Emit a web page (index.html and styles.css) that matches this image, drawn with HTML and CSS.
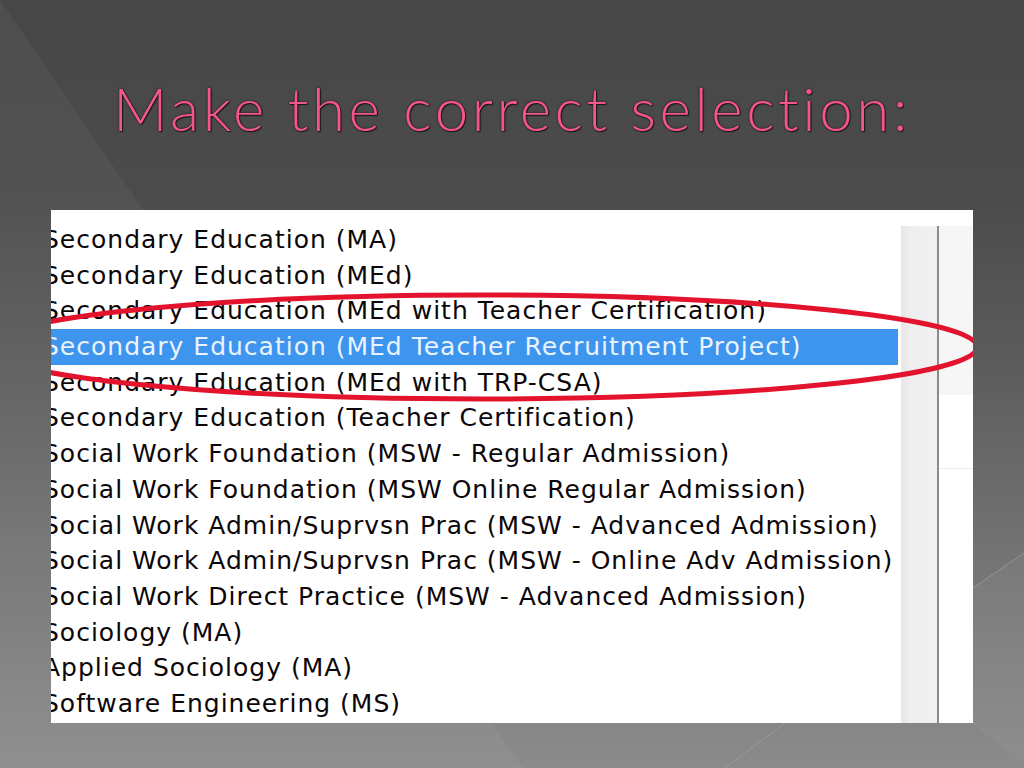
FILE: index.html
```html
<!DOCTYPE html>
<html lang="en">
<head>
<meta charset="utf-8">
<title>Make the correct selection</title>
<link rel="stylesheet" href="styles.css">
</head>
<body>
<div class="slide">
  <svg class="deco" width="1024" height="768" viewBox="0 0 1024 768" aria-hidden="true">
    <polygon points="0,0 523,768 0,768" fill="#ffffff" fill-opacity="0.045"/>
    <polygon points="1024,553 973,588 973,723 1024,760" fill="#ffffff" fill-opacity="0.04"/>
    <line x1="1024" y1="553" x2="960" y2="597" stroke="#a8a8a8" stroke-width="1" stroke-opacity="0.6"/>
    <line x1="785" y1="723" x2="725" y2="768" stroke="#a8a8a8" stroke-width="1" stroke-opacity="0.5"/>
    <line x1="973" y1="723" x2="1024" y2="762" stroke="#9a9a9a" stroke-width="1" stroke-opacity="0.5"/>
  </svg>
  <h1 class="title">Make the correct selection:</h1>
  <div class="shot">
    <div class="panes">
      <ul class="list">
        <li class="item">Secondary Education (MA)</li>
        <li class="item">Secondary Education (MEd)</li>
        <li class="item">Secondary Education (MEd with Teacher Certification)</li>
        <li class="item selected">Secondary Education (MEd Teacher Recruitment Project)</li>
        <li class="item">Secondary Education (MEd with TRP-CSA)</li>
        <li class="item">Secondary Education (Teacher Certification)</li>
        <li class="item">Social Work Foundation (MSW - Regular Admission)</li>
        <li class="item">Social Work Foundation (MSW Online Regular Admission)</li>
        <li class="item">Social Work Admin/Suprvsn Prac (MSW - Advanced Admission)</li>
        <li class="item">Social Work Admin/Suprvsn Prac (MSW - Online Adv Admission)</li>
        <li class="item">Social Work Direct Practice (MSW - Advanced Admission)</li>
        <li class="item">Sociology (MA)</li>
        <li class="item">Applied Sociology (MA)</li>
        <li class="item">Software Engineering (MS)</li>
      </ul>
      <div class="scroll"></div>
      <div class="divider"></div>
      <div class="side">
        <div class="side-top"></div>
        <div class="side-mid"></div>
      </div>
    </div>
    <svg class="circle" width="922" height="513" viewBox="0 0 922 513" aria-hidden="true">
      <ellipse cx="431" cy="137" rx="495" ry="52" fill="none" stroke="#e3132d" stroke-width="5"/>
    </svg>
  </div>
</div>
</body>
</html>
```

FILE: styles.css
```css
html, body {
  margin: 0;
  padding: 0;
}

body {
  width: 1024px;
  height: 768px;
  overflow: hidden;
  background: linear-gradient(180deg, #474747 0%, #4b4b4b 25%, #5a5a5a 45%, #767676 75%, #8b8b8b 100%);
}

.slide {
  position: relative;
  width: 1024px;
  height: 768px;
  display: flex;
  flex-direction: column;
}

.deco {
  position: absolute;
  left: 0;
  top: 0;
  z-index: 0;
}

.title {
  position: relative;
  z-index: 1;
  margin: 0;
  height: 210px;
  padding-top: 72px;
  box-sizing: border-box;
  text-align: center;
  font-family: "Lato", sans-serif;
  font-weight: 300;
  font-size: 60px;
  line-height: 72px;
  letter-spacing: 3.6px;
  color: #f4558e;
  text-shadow: 0 0 2px rgba(0, 0, 0, 0.85), 1px 1px 1px #1e1e1e;
}

.shot {
  position: relative;
  z-index: 1;
  margin-left: 51px;
  width: 922px;
  height: 513px;
  background: #ffffff;
  overflow: hidden;
}

.panes {
  display: grid;
  grid-template-columns: 850px 36px 2px 34px;
  height: 100%;
}

.list {
  list-style: none;
  margin: 0;
  padding: 12px 0 0 0;
  font-family: "DejaVu Sans", sans-serif;
  font-size: 25px;
  letter-spacing: 1px;
  color: #0c0608;
}

.item {
  width: 847px;
  height: 35.7px;
  line-height: 35.7px;
  white-space: nowrap;
  text-indent: -8px;
  box-sizing: border-box;
}

.selected {
  background: #3d95ee;
  color: #eaf3ff;
  outline: 1px dotted #b8742c;
  outline-offset: -1px;
}

.scroll {
  margin-top: 16px;
  background: linear-gradient(90deg, #e6e6e6 0%, #efefef 30%, #f0f0f0 100%);
}

.divider {
  margin-top: 16px;
  border-left: 2px solid #8c8c8c;
}

.side {
  margin-top: 16px;
  display: flex;
  flex-direction: column;
}

.side-top {
  height: 169px;
  background: #f6f6f6;
}

.side-mid {
  height: 73px;
  border-bottom: 1px solid #ececec;
}

.circle {
  position: absolute;
  left: 0;
  top: 0;
  pointer-events: none;
}
```
